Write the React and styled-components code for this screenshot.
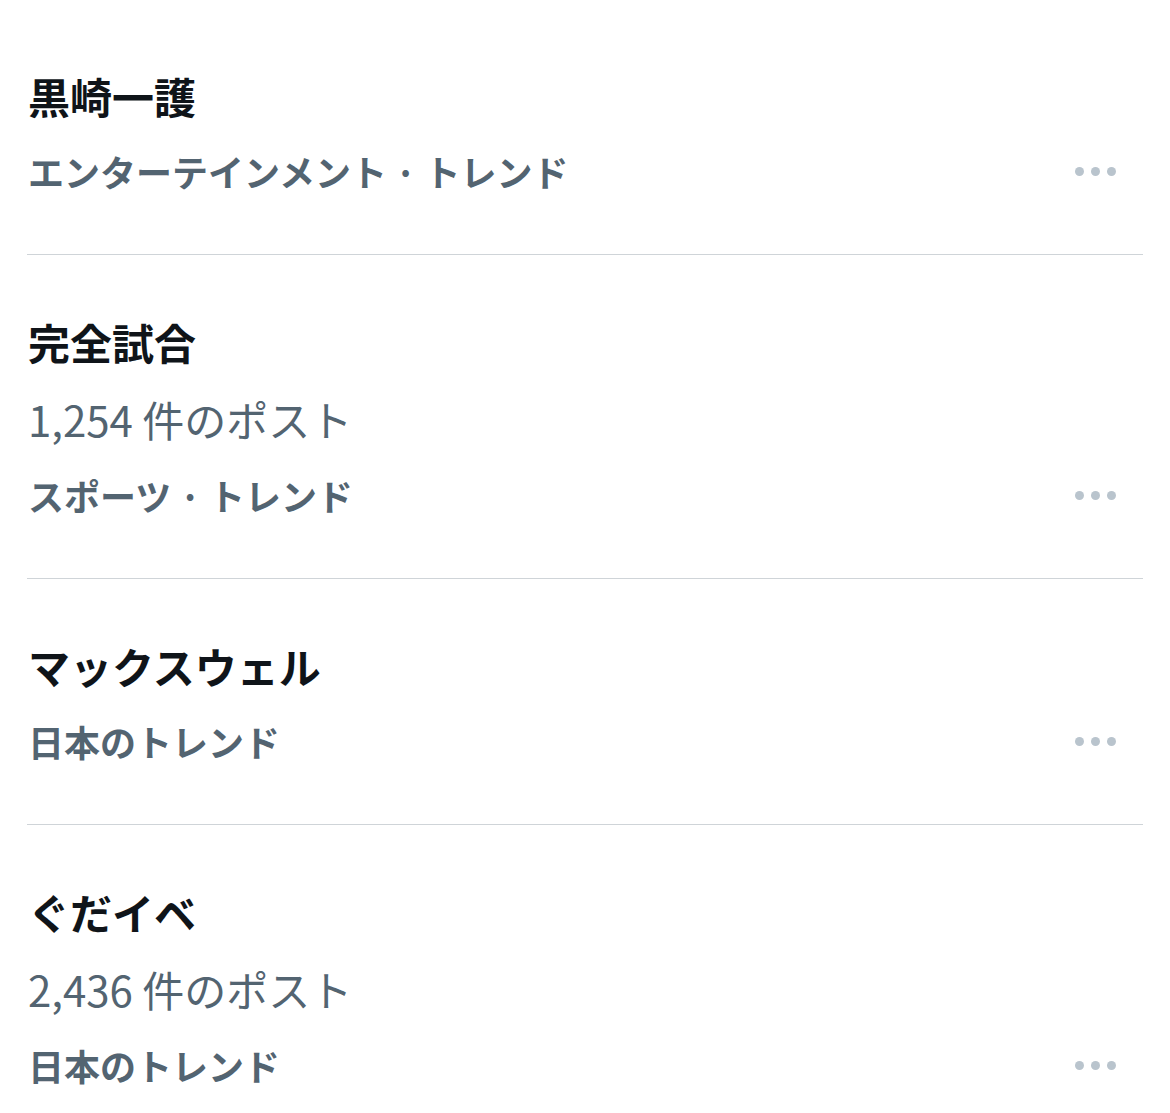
import React from "react";
import styled, { createGlobalStyle } from "styled-components";

const Global = createGlobalStyle`
  html, body { margin: 0; padding: 0; background: #ffffff; }
  body { font-family: "Noto Sans CJK JP", "Noto Sans", sans-serif; }
`;

const List = styled.div`
  padding: 9px 27px 0 27px;
  width: 1116px;
`;

const Item = styled.div`
  display: flex;
  align-items: flex-end;
  justify-content: space-between;
  padding: 49px 0 45px 1px;
  border-bottom: ${(p) => (p.$last ? "none" : "1px solid #cfd4d8")};
`;

const Texts = styled.div`
  display: flex;
  flex-direction: column;
`;

const Title = styled.div`
  font-size: 42px;
  font-weight: 700;
  color: #0f1419;
  line-height: 76px;
  height: 76px;
`;

const Count = styled.div`
  font-size: 42px;
  font-weight: 400;
  color: #536471;
  line-height: 78px;
  height: 78px;
`;

const Category = styled.div`
  font-size: 36px;
  font-weight: 600;
  color: #536471;
  line-height: 75px;
  height: 75px;
`;

const More = styled.div`
  display: flex;
  align-items: center;
  gap: 7px;
  height: 75px;
  margin-right: 27px;
`;

const Dot = styled.span`
  width: 9px;
  height: 9px;
  border-radius: 50%;
  background: #b9c4cd;
`;

const items = [
  { title: "黒崎一護", category: "エンターテインメント · トレンド" },
  { title: "完全試合", count: "1,254 件のポスト", category: "スポーツ · トレンド" },
  { title: "マックスウェル", category: "日本のトレンド" },
  { title: "ぐだイベ", count: "2,436 件のポスト", category: "日本のトレンド" },
];

export default function App() {
  return (
    <>
      <Global />
      <List>
        {items.map((it, i) => (
          <Item key={i} $last={i === items.length - 1}>
            <Texts>
              <Title>{it.title}</Title>
              {it.count && <Count>{it.count}</Count>}
              <Category>{it.category}</Category>
            </Texts>
            <More>
              <Dot />
              <Dot />
              <Dot />
            </More>
          </Item>
        ))}
      </List>
    </>
  );
}
